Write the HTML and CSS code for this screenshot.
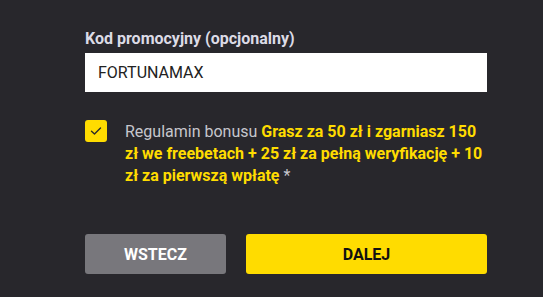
FILE: index.html
```html
<!DOCTYPE html>
<html lang="pl">
<head>
<meta charset="utf-8">
<link rel="stylesheet" href="styles.css">
</head>
<body>
<div class="form">
  <label class="label">Kod promocyjny (opcjonalny)</label>
  <div class="input">FORTUNAMAX</div>
  <div class="consent">
    <span class="checkbox">
      <svg width="12" height="10" viewBox="0 0 12 10"><path d="M1.5 5.2 L4.5 8 L10.5 2" fill="none" stroke="#2a2a2a" stroke-width="1.4" stroke-linecap="round" stroke-linejoin="round"/></svg>
    </span>
    <p class="terms">Regulamin bonusu <b>Grasz za 50 zł i zgarniasz 150 zł we freebetach + 25 zł za pełną weryfikację + 10 zł za pierwszą wpłatę</b> *</p>
  </div>
  <div class="buttons">
    <button class="btn back">WSTECZ</button>
    <button class="btn next">DALEJ</button>
  </div>
</div>
</body>
</html>
```
FILE: styles.css
```css
html, body {
  margin: 0;
  padding: 0;
  background: #28272c;
  height: 100%;
}
body {
  font-family: Roboto, "Liberation Sans", sans-serif;
}
.form {
  width: 402px;
  margin-left: 85px;
  padding-top: 29px;
  display: flex;
  flex-direction: column;
}
.label {
  color: #dcdbe6;
  font-weight: 700;
  font-size: 16px;
  line-height: 20px;
  margin-bottom: 4px;
}
.input {
  background: #fff;
  height: 39px;
  box-sizing: border-box;
  padding-left: 13px;
  display: flex;
  align-items: center;
  font-size: 16px;
  color: #222;
}
.consent {
  display: flex;
  margin-top: 28px;
  gap: 18px;
}
.checkbox {
  flex: none;
  width: 22px;
  height: 22px;
  background: #ffdc00;
  border-radius: 3px;
  display: flex;
  align-items: center;
  justify-content: center;
}
.terms {
  margin: 0;
  color: #c6c6cc;
  font-size: 16px;
  line-height: 22px;
  margin-top: 1px;
}
.terms b {
  color: #ffdc00;
}
.buttons {
  display: flex;
  gap: 20px;
  margin-top: 47px;
}
.btn {
  height: 40px;
  border: none;
  border-radius: 3px;
  font-family: Roboto, "Liberation Sans", sans-serif;
  font-weight: 700;
  font-size: 16px;
}
.back {
  width: 141px;
  background: #78777c;
  color: #fff;
}
.next {
  flex: 1;
  background: #ffdc00;
  color: #111;
}
```
